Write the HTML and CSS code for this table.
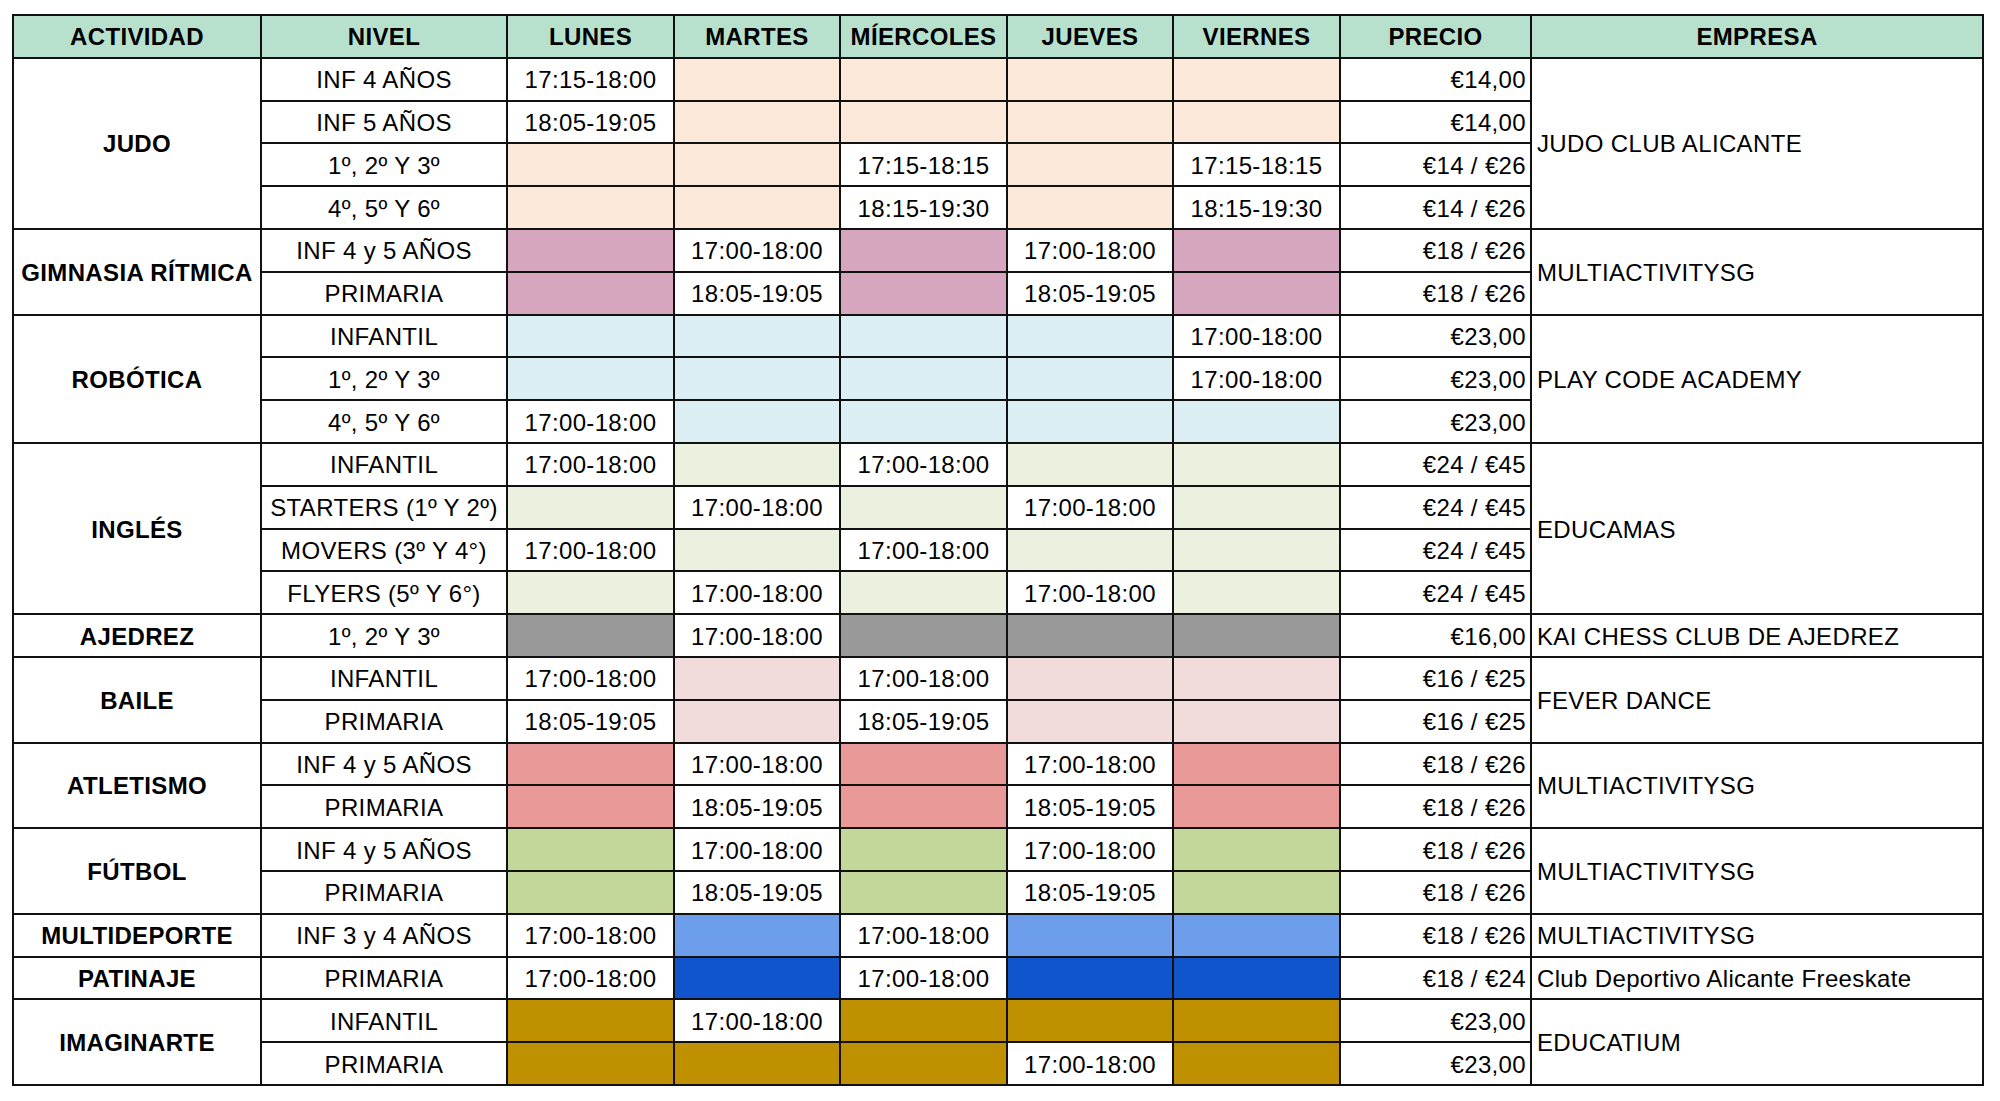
FILE: index.html
```html
<!DOCTYPE html>
<html lang="es">
<head>
<meta charset="utf-8">
<title>Actividades extraescolares</title>
<link rel="stylesheet" href="styles.css">
</head>
<body>
<table class="sched">
  <colgroup>
    <col class="c-act"><col class="c-niv"><col class="c-d1"><col class="c-d2"><col class="c-d1"><col class="c-d2"><col class="c-d1"><col class="c-pre"><col class="c-emp">
  </colgroup>
  <thead>
    <tr>
      <th>ACTIVIDAD</th><th>NIVEL</th><th>LUNES</th><th>MARTES</th><th>MÍERCOLES</th><th>JUEVES</th><th>VIERNES</th><th>PRECIO</th><th>EMPRESA</th>
    </tr>
  </thead>
  <tbody>
    <tr>
      <td class="act" rowspan="4">JUDO</td><td class="niv">INF 4 AÑOS</td>
      <td class="day">17:15-18:00</td><td class="day peach"></td><td class="day peach"></td><td class="day peach"></td><td class="day peach"></td>
      <td class="pre">€14,00</td><td class="emp" rowspan="4">JUDO CLUB ALICANTE</td>
    </tr>
    <tr>
      <td class="niv">INF 5 AÑOS</td>
      <td class="day">18:05-19:05</td><td class="day peach"></td><td class="day peach"></td><td class="day peach"></td><td class="day peach"></td>
      <td class="pre">€14,00</td>
    </tr>
    <tr>
      <td class="niv">1º, 2º Y 3º</td>
      <td class="day peach"></td><td class="day peach"></td><td class="day">17:15-18:15</td><td class="day peach"></td><td class="day">17:15-18:15</td>
      <td class="pre">€14 / €26</td>
    </tr>
    <tr>
      <td class="niv">4º, 5º Y 6º</td>
      <td class="day peach"></td><td class="day peach"></td><td class="day">18:15-19:30</td><td class="day peach"></td><td class="day">18:15-19:30</td>
      <td class="pre">€14 / €26</td>
    </tr>

    <tr>
      <td class="act" rowspan="2">GIMNASIA RÍTMICA</td><td class="niv">INF 4 y 5 AÑOS</td>
      <td class="day mag"></td><td class="day">17:00-18:00</td><td class="day mag"></td><td class="day">17:00-18:00</td><td class="day mag"></td>
      <td class="pre">€18 / €26</td><td class="emp" rowspan="2">MULTIACTIVITYSG</td>
    </tr>
    <tr>
      <td class="niv">PRIMARIA</td>
      <td class="day mag"></td><td class="day">18:05-19:05</td><td class="day mag"></td><td class="day">18:05-19:05</td><td class="day mag"></td>
      <td class="pre">€18 / €26</td>
    </tr>

    <tr>
      <td class="act" rowspan="3">ROBÓTICA</td><td class="niv">INFANTIL</td>
      <td class="day sky"></td><td class="day sky"></td><td class="day sky"></td><td class="day sky"></td><td class="day">17:00-18:00</td>
      <td class="pre">€23,00</td><td class="emp" rowspan="3">PLAY CODE ACADEMY</td>
    </tr>
    <tr>
      <td class="niv">1º, 2º Y 3º</td>
      <td class="day sky"></td><td class="day sky"></td><td class="day sky"></td><td class="day sky"></td><td class="day">17:00-18:00</td>
      <td class="pre">€23,00</td>
    </tr>
    <tr>
      <td class="niv">4º, 5º Y 6º</td>
      <td class="day">17:00-18:00</td><td class="day sky"></td><td class="day sky"></td><td class="day sky"></td><td class="day sky"></td>
      <td class="pre">€23,00</td>
    </tr>

    <tr>
      <td class="act" rowspan="4">INGLÉS</td><td class="niv">INFANTIL</td>
      <td class="day">17:00-18:00</td><td class="day olive"></td><td class="day">17:00-18:00</td><td class="day olive"></td><td class="day olive"></td>
      <td class="pre">€24 / €45</td><td class="emp" rowspan="4">EDUCAMAS</td>
    </tr>
    <tr>
      <td class="niv">STARTERS (1º Y 2º)</td>
      <td class="day olive"></td><td class="day">17:00-18:00</td><td class="day olive"></td><td class="day">17:00-18:00</td><td class="day olive"></td>
      <td class="pre">€24 / €45</td>
    </tr>
    <tr>
      <td class="niv">MOVERS (3º Y 4°)</td>
      <td class="day">17:00-18:00</td><td class="day olive"></td><td class="day">17:00-18:00</td><td class="day olive"></td><td class="day olive"></td>
      <td class="pre">€24 / €45</td>
    </tr>
    <tr>
      <td class="niv">FLYERS (5º Y 6°)</td>
      <td class="day olive"></td><td class="day">17:00-18:00</td><td class="day olive"></td><td class="day">17:00-18:00</td><td class="day olive"></td>
      <td class="pre">€24 / €45</td>
    </tr>

    <tr>
      <td class="act">AJEDREZ</td><td class="niv">1º, 2º Y 3º</td>
      <td class="day grey"></td><td class="day">17:00-18:00</td><td class="day grey"></td><td class="day grey"></td><td class="day grey"></td>
      <td class="pre">€16,00</td><td class="emp">KAI CHESS CLUB DE AJEDREZ</td>
    </tr>

    <tr>
      <td class="act" rowspan="2">BAILE</td><td class="niv">INFANTIL</td>
      <td class="day">17:00-18:00</td><td class="day rose"></td><td class="day">17:00-18:00</td><td class="day rose"></td><td class="day rose"></td>
      <td class="pre">€16 / €25</td><td class="emp" rowspan="2">FEVER DANCE</td>
    </tr>
    <tr>
      <td class="niv">PRIMARIA</td>
      <td class="day">18:05-19:05</td><td class="day rose"></td><td class="day">18:05-19:05</td><td class="day rose"></td><td class="day rose"></td>
      <td class="pre">€16 / €25</td>
    </tr>

    <tr>
      <td class="act" rowspan="2">ATLETISMO</td><td class="niv">INF 4 y 5 AÑOS</td>
      <td class="day salmon"></td><td class="day">17:00-18:00</td><td class="day salmon"></td><td class="day">17:00-18:00</td><td class="day salmon"></td>
      <td class="pre">€18 / €26</td><td class="emp" rowspan="2">MULTIACTIVITYSG</td>
    </tr>
    <tr>
      <td class="niv">PRIMARIA</td>
      <td class="day salmon"></td><td class="day">18:05-19:05</td><td class="day salmon"></td><td class="day">18:05-19:05</td><td class="day salmon"></td>
      <td class="pre">€18 / €26</td>
    </tr>

    <tr>
      <td class="act" rowspan="2">FÚTBOL</td><td class="niv">INF 4 y 5 AÑOS</td>
      <td class="day lime"></td><td class="day">17:00-18:00</td><td class="day lime"></td><td class="day">17:00-18:00</td><td class="day lime"></td>
      <td class="pre">€18 / €26</td><td class="emp" rowspan="2">MULTIACTIVITYSG</td>
    </tr>
    <tr>
      <td class="niv">PRIMARIA</td>
      <td class="day lime"></td><td class="day">18:05-19:05</td><td class="day lime"></td><td class="day">18:05-19:05</td><td class="day lime"></td>
      <td class="pre">€18 / €26</td>
    </tr>

    <tr>
      <td class="act">MULTIDEPORTE</td><td class="niv">INF 3 y 4 AÑOS</td>
      <td class="day">17:00-18:00</td><td class="day corn"></td><td class="day">17:00-18:00</td><td class="day corn"></td><td class="day corn"></td>
      <td class="pre">€18 / €26</td><td class="emp">MULTIACTIVITYSG</td>
    </tr>

    <tr>
      <td class="act">PATINAJE</td><td class="niv">PRIMARIA</td>
      <td class="day">17:00-18:00</td><td class="day navy"></td><td class="day">17:00-18:00</td><td class="day navy"></td><td class="day navy"></td>
      <td class="pre">€18 / €24</td><td class="emp">Club Deportivo Alicante Freeskate</td>
    </tr>

    <tr>
      <td class="act" rowspan="2">IMAGINARTE</td><td class="niv">INFANTIL</td>
      <td class="day gold"></td><td class="day">17:00-18:00</td><td class="day gold"></td><td class="day gold"></td><td class="day gold"></td>
      <td class="pre">€23,00</td><td class="emp" rowspan="2">EDUCATIUM</td>
    </tr>
    <tr>
      <td class="niv">PRIMARIA</td>
      <td class="day gold"></td><td class="day gold"></td><td class="day gold"></td><td class="day">17:00-18:00</td><td class="day gold"></td>
      <td class="pre">€23,00</td>
    </tr>
  </tbody>
</table>
</body>
</html>
```
FILE: styles.css
```css
html, body {
  margin: 0;
  padding: 0;
  background: #ffffff;
}

body {
  padding: 14px 0 0 12px;
  font-family: "Liberation Sans", Arial, sans-serif;
  color: #000000;
}

.sched {
  border-collapse: collapse;
  table-layout: fixed;
  width: 1970px;
  font-size: 24px;
  line-height: 1;
  letter-spacing: 0.35px;
}

.c-act { width: 248px; }
.c-niv { width: 246px; }
.c-d1 { width: 167px; }
.c-d2 { width: 166px; }
.c-pre { width: 191px; }
.c-emp { width: 452px; }

.sched th,
.sched td {
  border: 2px solid #111111;
  padding: 2px 0 0 0;
  height: 42.8px;
  box-sizing: border-box;
  vertical-align: middle;
  white-space: nowrap;
  overflow: hidden;
}

.sched th {
  background: #b7e1cd;
  font-weight: 700;
  text-align: center;
}

.act {
  font-weight: 700;
  text-align: center;
}

.niv,
.day {
  text-align: center;
}

.pre {
  text-align: right;
  padding-right: 4px !important;
}

.emp {
  text-align: left;
  padding-left: 5px !important;
}

.peach { background: #fde9d9; }
.mag { background: #d5a6bd; }
.sky { background: #daeef3; }
.olive { background: #ebf1de; }
.grey { background: #999999; }
.rose { background: #f2dcdb; }
.salmon { background: #ea9999; }
.lime { background: #c4d79b; }
.corn { background: #6d9eeb; }
.navy { background: #1155cc; }
.gold { background: #bf9000; }
```
